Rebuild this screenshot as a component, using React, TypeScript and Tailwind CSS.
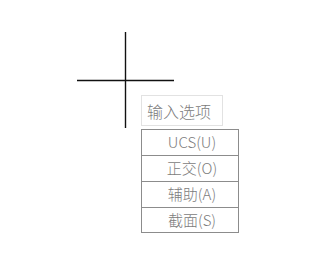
const options = ["UCS(U)", "正交(O)", "辅助(A)", "截面(S)"];

export default function App() {
  return (
    <div
      className="relative w-[309px] h-[255px] bg-white overflow-hidden"
      style={{ fontFamily: '"Noto Sans CJK SC", "Liberation Sans", sans-serif' }}
    >
      {/* crosshair cursor */}
      <svg className="absolute left-0 top-0" width="309" height="255">
        <line x1="125.5" y1="32" x2="125.5" y2="128" stroke="#111" strokeWidth="1.4" />
        <line x1="77" y1="80.5" x2="174" y2="80.5" stroke="#111" strokeWidth="1.4" />
      </svg>

      {/* dynamic input prompt */}
      <div className="absolute left-[141px] top-[95px] flex flex-col">
        <div className="flex items-center w-[82px] h-[31px] pl-[5px] border border-[#e2e2e2] bg-white text-[16px] text-[#7c7c7c] font-light">
          输入选项
        </div>
        <ul className="mt-[3px] w-[98px] border border-[#8c8c8c] bg-white">
          {options.map((opt, i) => (
            <li
              key={opt}
              className={`flex items-center justify-center pl-1 text-[15px] text-[#7c7c7c] font-light ${
                i < options.length - 1 ? "h-[26px] border-b border-[#8c8c8c]" : "h-[24px]"
              }`}
            >
              {opt}
            </li>
          ))}
        </ul>
      </div>
    </div>
  );
}
